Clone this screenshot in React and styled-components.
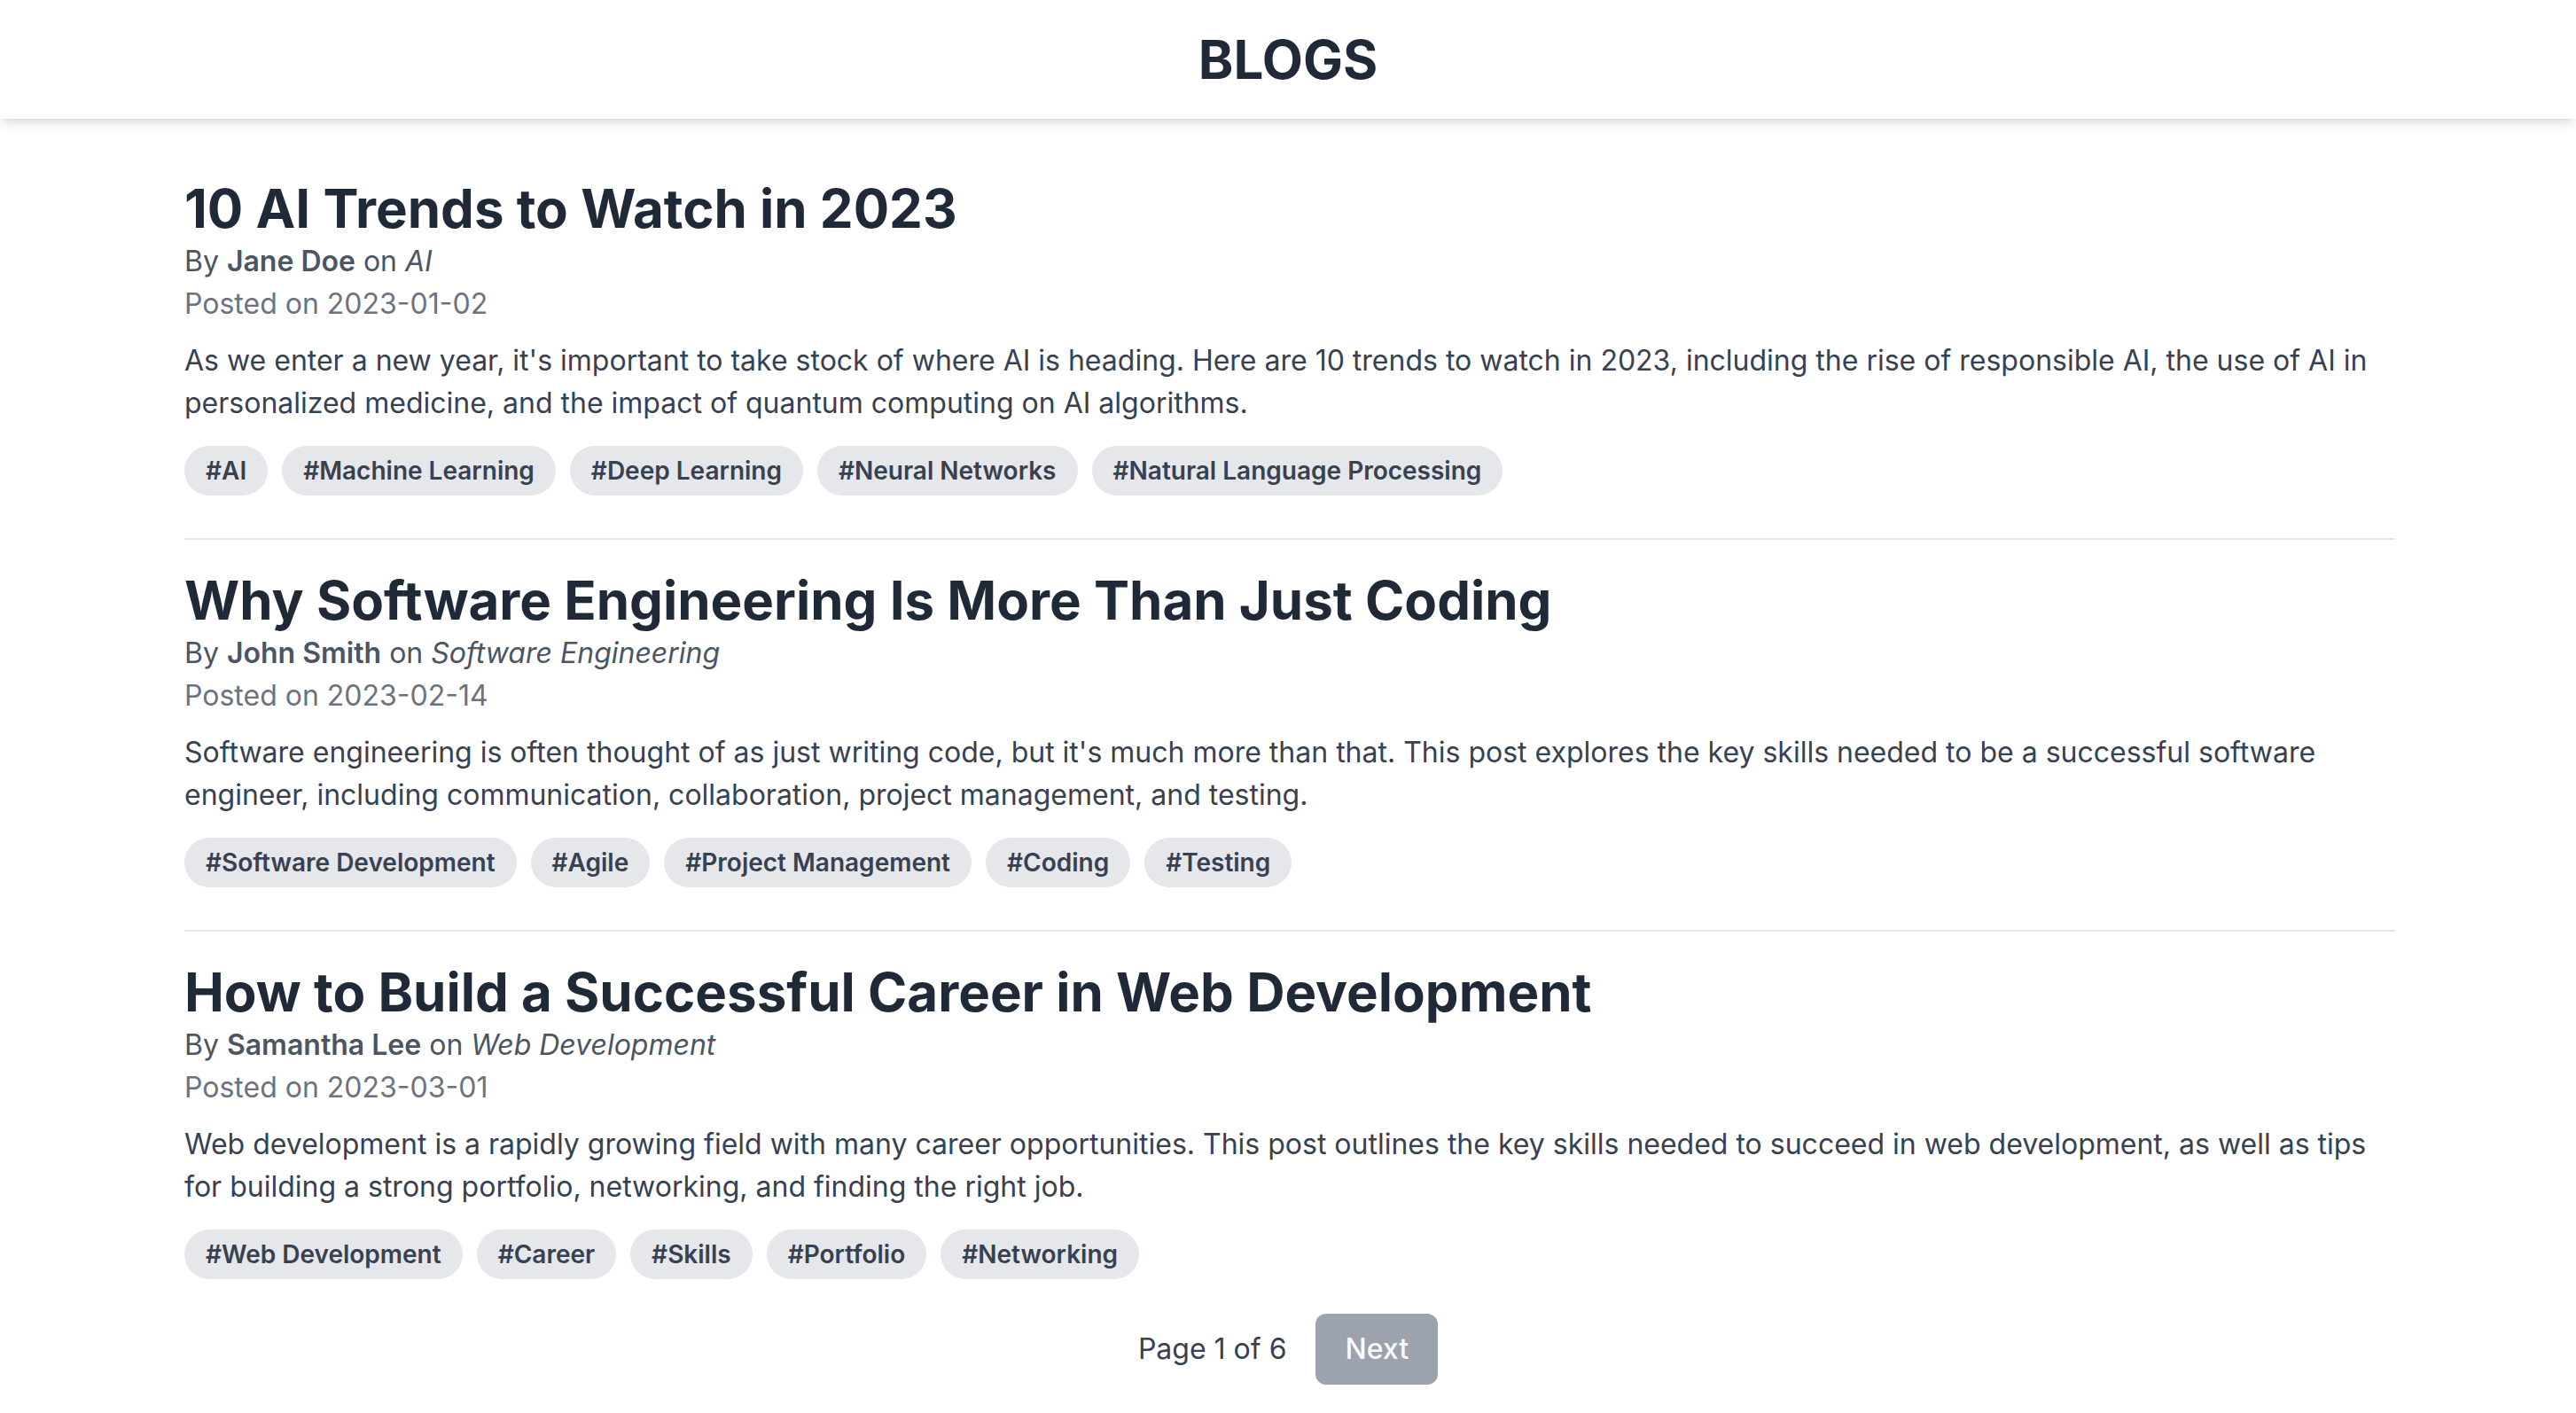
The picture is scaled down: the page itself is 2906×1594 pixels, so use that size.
import React from "react";
import styled, { createGlobalStyle } from "styled-components";

const posts = [
    {
        id: 1,
        title: "10 AI Trends to Watch in 2023",
        author: "Jane Doe",
        category: "AI",
        date: "2023-01-02",
        body: "As we enter a new year, it's important to take stock of where AI is heading. Here are 10 trends to watch in 2023, including the rise of responsible AI, the use of AI in personalized medicine, and the impact of quantum computing on AI algorithms.",
        tags: ["AI", "Machine Learning", "Deep Learning", "Neural Networks", "Natural Language Processing"],
    },
    {
        id: 2,
        title: "Why Software Engineering Is More Than Just Coding",
        author: "John Smith",
        category: "Software Engineering",
        date: "2023-02-14",
        body: "Software engineering is often thought of as just writing code, but it's much more than that. This post explores the key skills needed to be a successful software engineer, including communication, collaboration, project management, and testing.",
        tags: ["Software Development", "Agile", "Project Management", "Coding", "Testing"],
    },
    {
        id: 3,
        title: "How to Build a Successful Career in Web Development",
        author: "Samantha Lee",
        category: "Web Development",
        date: "2023-03-01",
        body: "Web development is a rapidly growing field with many career opportunities. This post outlines the key skills needed to succeed in web development, as well as tips for building a strong portfolio, networking, and finding the right job.",
        tags: ["Web Development", "Career", "Skills", "Portfolio", "Networking"],
    },
];

function Post(props) {
    const { post } = props;

    return (
        <PostCard>
            <PostTitle>{post.title}</PostTitle>
            <Byline>
                By <Author>{post.author}</Author> on <Category>{post.category}</Category>
            </Byline>
            <PostedOn>Posted on {post.date}</PostedOn>
            <Excerpt>{post.body}</Excerpt>
            <TagList>
                {post.tags.map(function (tag) {
                    return <Tag key={tag}>#{tag}</Tag>;
                })}
            </TagList>
        </PostCard>
    );
}

function App() {
    return (
        <>
            <GlobalStyle />
            <Header>
                <HeaderTitle>BLOGS</HeaderTitle>
            </Header>
            <Main>
                {posts.map(function (post) {
                    return <Post key={post.id} post={post} />;
                })}
            </Main>
            <Pagination>
                <PageInfo>Page 1 of 6</PageInfo>
                <NextButton disabled>Next</NextButton>
            </Pagination>
        </>
    );
}

const GlobalStyle = createGlobalStyle`
* {
    box-sizing: border-box;
}

html, body {
    margin: 0;
    padding: 0;
    background: #ffffff;
}

body {
    font-family: Inter, "Noto Sans", "Liberation Sans", sans-serif;
    color: #1f2937;
}
`;

const Header = styled.header`
    background: #ffffff;
    padding: 31px 0;
    text-align: center;
    box-shadow: 0 8px 12px -2px rgba(0, 0, 0, 0.1), 0 4px 8px -4px rgba(0, 0, 0, 0.1);
    position: relative;
    z-index: 1;
`;

const HeaderTitle = styled.h1`
    margin: 0;
    font-size: 60px;
    line-height: 72px;
    font-weight: 700;
    color: #1f2937;
`;

const Main = styled.main`
    max-width: 2560px;
    margin: 0 auto;
    padding: 65px 31px 200px 35px;
`;

const PostCard = styled.article`
    padding-bottom: 48px;
    margin-bottom: 32px;
    border-bottom: 2px solid #e5e7eb;
`;

const PostTitle = styled.h2`
    margin: 0;
    font-size: 60px;
    line-height: 72px;
    font-weight: 700;
    color: #1f2937;
`;

const Byline = styled.p`
    margin: 0;
    font-size: 32px;
    line-height: 48px;
    color: #4b5563;
`;

const Author = styled.span`
    font-weight: 600;
`;

const Category = styled.em`
    font-style: italic;
`;

const PostedOn = styled.p`
    margin: 0;
    font-size: 32px;
    line-height: 48px;
    color: #6b7280;
`;

const Excerpt = styled.p`
    margin: 16px 0 0;
    font-size: 32px;
    line-height: 48px;
    color: #374151;
`;

const TagList = styled.div`
    display: flex;
    flex-wrap: wrap;
    gap: 16px;
    margin-top: 24px;
`;

const Tag = styled.span`
    display: inline-block;
    padding: 8px 24px;
    border-radius: 9999px;
    background: #e5e7eb;
    color: #374151;
    font-size: 28px;
    line-height: 40px;
    font-weight: 600;
`;

const Pagination = styled.nav`
    position: fixed;
    left: 0;
    right: 0;
    bottom: 0;
    display: flex;
    justify-content: center;
    align-items: center;
    gap: 33px;
    padding: 32px 0;
    background: #ffffff;
`;

const PageInfo = styled.span`
    font-size: 32px;
    line-height: 48px;
    color: #374151;
`;

const NextButton = styled.button`
    font-family: inherit;
    font-size: 32px;
    line-height: 48px;
    font-weight: 500;
    padding: 16px 33px;
    border: none;
    border-radius: 12px;
    background: #9ca3af;
    color: #f9fafb;
    cursor: not-allowed;
`;

export default App;
